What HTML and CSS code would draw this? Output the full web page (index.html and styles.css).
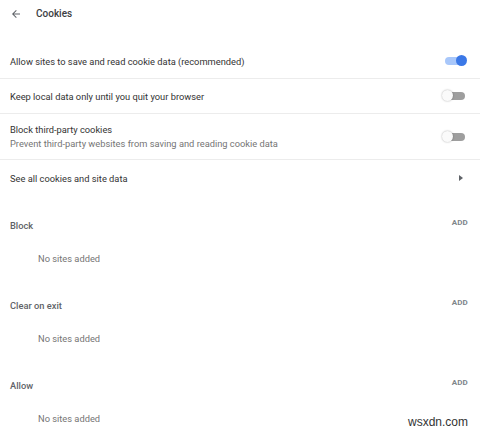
FILE: index.html
```html
<!DOCTYPE html>
<html lang="en">
<head>
<meta charset="utf-8">
<title>Cookies</title>
<link rel="stylesheet" href="styles.css">
</head>
<body>
<div class="page">
  <header class="header">
    <svg class="back" viewBox="0 0 24 24" width="12" height="12"><path d="M20 11H7.83l5.59-5.59L12 4l-8 8 8 8 1.41-1.41L7.83 13H20v-2z" fill="#5f6368"/></svg>
    <h1 class="title">Cookies</h1>
  </header>

  <div class="list">
    <div class="row row-first">
      <span class="label">Allow sites to save and read cookie data (recommended)</span>
      <span class="toggle on"><span class="track"></span><span class="knob"></span></span>
    </div>
    <div class="row">
      <span class="label">Keep local data only until you quit your browser</span>
      <span class="toggle"><span class="track"></span><span class="knob"></span></span>
    </div>
    <div class="row row-tall">
      <div class="texts">
        <span class="label">Block third-party cookies</span>
        <span class="sub">Prevent third-party websites from saving and reading cookie data</span>
      </div>
      <span class="toggle"><span class="track"></span><span class="knob"></span></span>
    </div>
    <div class="row row-link">
      <span class="label">See all cookies and site data</span>
      <span class="chevron"></span>
    </div>
  </div>

  <section class="section">
    <div class="section-head"><span class="section-title">Block</span><span class="add">ADD</span></div>
    <div class="empty">No sites added</div>
  </section>
  <section class="section">
    <div class="section-head"><span class="section-title">Clear on exit</span><span class="add">ADD</span></div>
    <div class="empty">No sites added</div>
  </section>
  <section class="section">
    <div class="section-head"><span class="section-title">Allow</span><span class="add">ADD</span></div>
    <div class="empty">No sites added</div>
  </section>

  <div class="watermark">wsxdn.com</div>
</div>
</body>
</html>
```

FILE: styles.css
```css
html, body {
  margin: 0;
  padding: 0;
  background: #ffffff;
}
body {
  font-family: Roboto, "Liberation Sans", Arial, sans-serif;
  color: #333333;
  font-size: 9.3px;
  width: 480px;
  height: 430px;
  overflow: hidden;
}
.page {
  position: relative;
  width: 480px;
  height: 430px;
}
.header {
  display: flex;
  align-items: center;
  height: 27px;
  padding-left: 10px;
  margin-bottom: 17px;
}
.back {
  display: block;
  margin-right: 14px;
}
.title {
  margin: 0;
  font-size: 10px;
  font-weight: 500;
  color: #3c4043;
}
.list {
  display: flex;
  flex-direction: column;
}
.row {
  display: flex;
  align-items: center;
  justify-content: space-between;
  height: 34px;
  padding: 0 12px 0 10px;
  border-bottom: 1px solid #ececec;
}
.row-tall {
  height: 45px;
}
.row-link {
  height: 36px;
  border-bottom: none;
  padding-right: 17px;
}
.label {
  color: #333333;
  font-size: 9.3px;
}
.texts {
  display: flex;
  flex-direction: column;
  gap: 3px;
}
.sub {
  color: #757575;
  font-size: 9.3px;
}
.toggle {
  position: relative;
  display: block;
  width: 26px;
  height: 12px;
}
.toggle .track {
  position: absolute;
  left: 4px;
  top: 2px;
  width: 19px;
  height: 8px;
  border-radius: 4px;
  background: #9e9e9e;
}
.toggle .knob {
  position: absolute;
  left: 0;
  top: 0;
  width: 11px;
  height: 11px;
  border-radius: 50%;
  background: #fafafa;
  box-shadow: 0 0 2px rgba(0, 0, 0, 0.35);
}
.toggle.on .track {
  background: #a8c7fa;
  left: 3px;
}
.toggle.on .knob {
  left: 14px;
  background: #3b78e7;
  box-shadow: none;
}
.chevron {
  display: block;
  width: 0;
  height: 0;
  border-top: 3px solid transparent;
  border-bottom: 3px solid transparent;
  border-left: 4px solid #5f6368;
}
.section {
  display: flex;
  flex-direction: column;
  padding-bottom: 14px;
}
.section:first-of-type {
  margin-top: 12px;
}
.section-head {
  display: flex;
  align-items: center;
  justify-content: space-between;
  height: 34px;
  padding: 0 12px 0 10px;
}
.section-title {
  color: #5f6368;
  font-size: 9.3px;
  font-weight: 500;
}
.add {
  color: #80868b;
  font-size: 8px;
  font-weight: 700;
  letter-spacing: 0.2px;
  margin-bottom: 6px;
}
.empty {
  display: flex;
  align-items: center;
  height: 32px;
  padding-left: 38px;
  color: #757575;
  font-size: 9.3px;
}
.watermark {
  position: absolute;
  right: 12px;
  bottom: 1px;
  font-family: "Liberation Sans", Arial, sans-serif;
  font-size: 12px;
  color: #333333;
  background: #ffffff;
}
```
